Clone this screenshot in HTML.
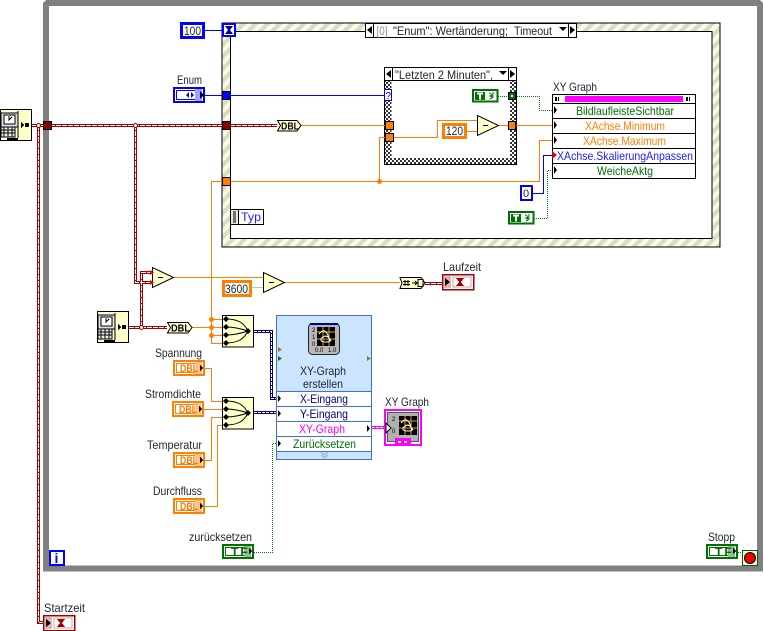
<!DOCTYPE html>
<html><head><meta charset="utf-8"><style>
html,body{margin:0;padding:0;background:#fff;width:764px;height:631px;overflow:hidden}
svg{display:block}
text{font-family:"Liberation Sans",sans-serif;font-size:12px;fill:#1c2430}
.c{shape-rendering:crispEdges}
.d{font-size:11px;font-weight:bold;fill:#ff7800}
.t{font-size:12px;font-weight:bold;fill:#006800;letter-spacing:2px}
.k{font-size:10px;font-weight:bold;fill:#000}
</style></head><body>
<svg width="764" height="631" viewBox="0 0 764 631" xmlns="http://www.w3.org/2000/svg">
<defs>
<pattern id="st" width="8.5" height="8.5" patternUnits="userSpaceOnUse" patternTransform="rotate(45)"><rect width="8.5" height="8.5" fill="#fbfbe6"/><rect width="4.2" height="8.5" fill="#dcdcc6"/></pattern>
<pattern id="ck" width="4" height="4" patternUnits="userSpaceOnUse"><rect width="4" height="4" fill="#fff"/><rect width="2" height="2" fill="#333"/><rect x="2" y="2" width="2" height="2" fill="#333"/></pattern>
<g id="pc" class="c"><rect x=".5" y=".5" width="31" height="31" fill="#ffffcc" stroke="#000"/>
<rect x="1" y="4" width="17" height="14" fill="#ddd" stroke="#000"/><rect x="4" y="6" width="11" height="9" fill="#fff" stroke="#000"/><path d="M9 7v4l3-3" stroke="#000" fill="none"/>
<rect x="1" y="18" width="14" height="10" fill="#eee" stroke="#000"/><path d="M4 18v10M8 18v10M12 18v10M1 21h14M1 24h14" stroke="#000"/><path d="M18 2v27" stroke="#000"/>
<path d="M7 30h11" stroke="#000" stroke-width="2"/><path d="M21 13v6l3-3z" fill="#000"/><rect x="25" y="14" width="4" height="4" fill="#000"/></g>
<g id="bun"><rect x=".5" y=".5" width="31" height="31.5" fill="#ffffcc" stroke="#000" class="c"/>
<path d="M4 4C16 4 22 8 26 16M4 12C12 12 20 14 26 16M4 20C12 20 20 18 26 16M4 28C16 28 22 24 26 16" fill="none" stroke="#000"/>
<path d="M4 1l3 3-3 3-3-3zM4 9l3 3-3 3-3-3zM4 17l3 3-3 3-3-3zM4 25l3 3-3 3-3-3zM26 13l3 3-3 3-3-3z" fill="#000"/></g>
<g id="tri"><path d="M.5.5v20l21-10z" fill="#ffffcc" stroke="#000"/><path d="M6 10.500h5" stroke="#000"/></g>
<g id="ctlO" class="c"><rect x="1" y="1" width="30" height="14" fill="#fff" stroke="#ff8000" stroke-width="2"/><rect x="3.500" y="3.500" width="25" height="9" fill="#fff" stroke="#ff8000"/><rect x="22" y="2" width="7" height="12" fill="#ffc080"/><path d="M27 5v6l3-3z" fill="#000"/></g>
<g id="ctlG" class="c"><rect x="1" y="1" width="30" height="13" fill="#fff" stroke="#007000" stroke-width="2"/><rect x="3.500" y="3.500" width="25" height="8" fill="#fff" stroke="#007000"/><rect x="22" y="2" width="7" height="11" fill="#90c090"/><path d="M27 4v6l3-3z" fill="#000"/></g>
<g id="tc" class="c"><rect x="1" y="1" width="24.500" height="11.500" fill="#fff" stroke="#007000" stroke-width="2"/><rect x="3" y="3" width="10" height="8" fill="#007000"/><path d="M5 4.500h6M8 4.500v6" stroke="#fff" stroke-width="2"/><path d="M17 4l4 2-3 1 3 1-3 2M20 4h2" stroke="#007000" fill="none"/></g>
<g id="ts" class="c"><rect x=".5" y=".5" width="31" height="15" fill="#fff" stroke="#a00000" stroke-width="1.500"/><rect x="2" y="2" width="7" height="12" fill="#e8b0b0"/><path d="M3 4v8l5-4z" fill="#000"/><rect x="11" y="3" width="18" height="10" fill="none" stroke="#b0b0b0"/><path d="M14 4h8l-3 4 3 4h-8l3-4z" fill="#a00000"/></g>
</defs>

<!-- while loop -->
<path class="c" d="M46 3H760V568.500H46Z" fill="none" stroke="#808080" stroke-width="6"/>
<path d="M43 3l3-3h-3zM763 3l-3-3h4z" fill="#fff"/>
<rect class="c" x="50" y="551" width="14" height="14" fill="#fff" stroke="#0000ff" stroke-width="2"/>
<text x="54.500" y="563" style="font-size:14px;font-weight:bold;fill:#0000ff">i</text>

<!-- event structure -->
<rect class="c" x="222" y="23" width="498" height="224" fill="url(#st)" stroke="#000"/>
<rect class="c" x="230.500" y="31.500" width="481.500" height="207" fill="#fff" stroke="#000"/>
<g class="c"><rect x="365.500" y="23.500" width="211" height="14" fill="#fff" stroke="#000"/><rect x="365.500" y="23.500" width="8" height="14" fill="#fff" stroke="#000"/><rect x="568.500" y="23.500" width="8" height="14" fill="#fff" stroke="#000"/></g>
<path d="M372 26v8l-5-4zM570 26v8l5-4zM559 27h8l-4 4z" fill="#000"/>
<text x="376.500" y="35" textLength="11" lengthAdjust="spacingAndGlyphs" style="fill:#8090b8">[0]</text>
<text x="393" y="35" textLength="115" lengthAdjust="spacingAndGlyphs">"Enum": Wertänderung;</text>
<text x="514" y="35" textLength="38" lengthAdjust="spacingAndGlyphs">Timeout</text>

<!-- case structure -->
<rect class="c" x="384.500" y="67.500" width="132" height="97" fill="url(#ck)" stroke="#000"/>
<rect class="c" x="391.500" y="80.500" width="118.500" height="77.500" fill="#fff"/>
<g class="c"><rect x="384.500" y="67.500" width="132" height="13" fill="#fff" stroke="#000"/><rect x="384.500" y="67.500" width="8" height="13" fill="#fff" stroke="#000"/><rect x="508.500" y="67.500" width="8" height="13" fill="#fff" stroke="#000"/></g>
<path d="M391 70v8l-5-4zM510 70v8l5-4zM499 71h8l-4 4z" fill="#000"/>
<text x="395" y="79" textLength="98" lengthAdjust="spacingAndGlyphs">"Letzten 2 Minuten",</text>

<!-- wires thin -->
<g fill="none" class="c">
<path d="M205 30.500H222" stroke="#0000ff"/>
<path d="M205 95.500H384" stroke="#0000ff"/>
<path d="M533 193.500H543.500V155.500H552" stroke="#0000ff"/>
<g stroke="#ff8000">
<path d="M301 125.500H385M516 125.500H552M498 125.500H508"/>
<path d="M211.500 181.500V343.500H222M211.500 181.500H539.500V140.500H552"/>
<path d="M379.500 181.500V137.500H385M393 137.500H437.500V120.500H477M467 131.500H477"/>
<path d="M192 327.500H222M211.500 319.500H222M211.500 335.500H222"/>
<path d="M173 277.500H263M284 282.500H400"/>
<path d="M205 368.500H211.500V401.500H222M204 409.500H222M205 460.500H211.500V417.500H222M205 506.500H217.500V425.500H222"/>
</g>
<path d="M252 287.500H263" stroke="#c0c0c0"/>
<g stroke="#008000" stroke-dasharray="1 1">
<path d="M498 96.500H508M517 96.500H539.500V110.500H552"/>
<path d="M534 218.500H547.500V170.500H552"/>
<path d="M254 552.500H272.500V443.500H276"/>
<path d="M738 552.500H743"/>
</g>
</g>

<rect class="c" x="384.500" y="89.500" width="7" height="11" fill="#fff" stroke="#0000ff"/>
<text x="385.500" y="99" style="font-size:10px;fill:#0000c0">?</text>
<g class="c" stroke="#000">
<rect x="385.500" y="121.500" width="8" height="8" fill="#ff8000"/><rect x="385.500" y="133.500" width="8" height="8" fill="#ff8000"/><rect x="508.500" y="121.500" width="7" height="8" fill="#ff8000"/>
<rect x="508.500" y="92.500" width="7" height="7" fill="#007000"/></g><rect class="c" x="511" y="95" width="2" height="2" fill="#fff"/>
<use href="#tri" x="477" y="115"/>
<rect class="c" x="443.500" y="124.500" width="22" height="13" fill="#fff" stroke="#ff8000" stroke-width="3"/>
<text x="446" y="135" textLength="17" lengthAdjust="spacingAndGlyphs">120</text>
<use href="#tc" x="472" y="89"/>

<!-- property node -->
<g class="c"><rect x="552.500" y="94.500" width="143" height="84" fill="#fff" stroke="#000"/><rect x="553" y="95" width="142" height="8" fill="#fffff0"/><path d="M552 103.500H696M552 118.500H696M552 133.500H696M552 148.500H696M552 163.500H696" stroke="#000"/><rect x="565" y="96" width="118" height="6" fill="#ff00ff"/></g>
<path d="M555 97h2v4h-2zM558 97h1v4h-1zM686 97h2v4h-2zM689 97h1v4h-1z" fill="#000" class="c"/>
<path d="M554 106v8l3-4zM554 121v8l3-4zM554 136v8l3-4zM554 166v8l3-4z" fill="#000"/><path d="M552 151v8l5-4z" fill="#d00000"/>
<text x="576" y="115" textLength="98" lengthAdjust="spacingAndGlyphs" style="fill:#007000">BildlaufleisteSichtbar</text>
<text x="585" y="130" textLength="80" lengthAdjust="spacingAndGlyphs" style="fill:#ff8000">XAchse.Minimum</text>
<text x="583" y="145" textLength="83" lengthAdjust="spacingAndGlyphs" style="fill:#ff8000">XAchse.Maximum</text>
<text x="557" y="160" textLength="136" lengthAdjust="spacingAndGlyphs" style="fill:#2020ff">XAchse.SkalierungAnpassen</text>
<text x="597" y="175" textLength="56" lengthAdjust="spacingAndGlyphs" style="fill:#007000">WeicheAktg</text>
<text x="553" y="91" textLength="44" lengthAdjust="spacingAndGlyphs">XY Graph</text>

<rect class="c" x="521" y="186" width="11" height="14" fill="#fff" stroke="#0000ff" stroke-width="2"/>
<text x="523" y="197" style="font-size:11px">0</text>
<use href="#tc" x="508" y="211"/>

<!-- Typ -->
<g class="c"><rect x="230.500" y="209.500" width="33" height="15" fill="#fff" stroke="#000"/><rect x="231" y="210" width="7" height="14" fill="#e8e8d8"/><path d="M238.500 209v16" stroke="#000"/><rect x="233" y="211" width="3" height="12" fill="#707070"/></g>
<text x="241" y="221" textLength="20" lengthAdjust="spacingAndGlyphs" style="fill:#2020ff">Typ</text>

<!-- thick wires -->
<g fill="none" class="c">
<path d="M32 125.500H277M38.500 125V622.500H43M135.500 125V282.500H152M129 327.500H167M141.500 327V272.500H152" stroke="#a00000" stroke-width="3"/>
<path d="M32 125.500H277M38.500 125V622.500H43M135.500 125V282.500H152M129 327.500H167M141.500 327V272.500H152" stroke="#fff" stroke-width="1" stroke-dasharray="5 1"/>
<path d="M425 283.500H442" stroke="#a00000" stroke-width="3"/>
<path d="M425 283.500H442" stroke="#fff" stroke-width="1" stroke-dasharray="5 1"/>
<path d="M254 331.500H271.500V398.500H276M254 412.500H276" stroke="#000080" stroke-width="3"/>
<path d="M254 331.500H271.500V398.500H276M254 412.500H276" stroke="#fff" stroke-width="1" stroke-dasharray="3 1"/>
<path d="M372 427.500H386" stroke="#ff00ff" stroke-width="3"/>
<path d="M372 427.500H386" stroke="#fff" stroke-width="1" stroke-dasharray="3 1"/>
</g>
<circle cx="38.500" cy="125.500" r="2" fill="#fff" stroke="#a00000" stroke-width="1"/>
<circle cx="135.500" cy="125.500" r="2" fill="#fff" stroke="#a00000" stroke-width="1"/>
<circle cx="141.500" cy="327.500" r="2" fill="#fff" stroke="#a00000" stroke-width="1"/>
<g fill="#ff8000"><circle cx="379.500" cy="181.500" r="2.500"/><circle cx="211.500" cy="319.500" r="2.500"/><circle cx="211.500" cy="327.500" r="2.500"/><circle cx="211.500" cy="335.500" r="2.500"/></g>

<!-- tunnels -->
<g class="c" stroke="#000">
<rect x="43.500" y="121.500" width="8" height="8" fill="#8b0000"/>
<rect x="222.500" y="121.500" width="8" height="8" fill="#8b0000"/>
<rect x="222.500" y="91.500" width="8" height="8" fill="#0000ff"/>
<rect x="222.500" y="177.500" width="8" height="8" fill="#ff8000"/>
</g>

<!-- timeout -->
<rect class="c" x="181.500" y="23.500" width="22" height="14" fill="#fff" stroke="#0000ff" stroke-width="3"/>
<text x="184" y="35" textLength="17" lengthAdjust="spacingAndGlyphs">100</text>
<rect class="c" x="223" y="24" width="12" height="12" fill="#fff" stroke="#0000ff" stroke-width="2"/>
<path d="M225 26h8l-3 4 3 4h-8l3-4z" fill="#000080"/>

<!-- enum -->
<rect class="c" x="174" y="88" width="30" height="14" fill="#fff" stroke="#0000ff" stroke-width="2"/>
<rect class="c" x="176.500" y="90.500" width="24" height="9" fill="#fff" stroke="#0000ff"/>
<rect class="c" x="195" y="89" width="7" height="12" fill="#a0a0ff"/>
<path d="M189 92v6l-3-3zM191 92v6l3-3z" fill="#0000d0"/><path d="M200 91v8l4-4z" fill="#000"/>
<text x="177" y="84" textLength="25" lengthAdjust="spacingAndGlyphs">Enum</text>

<!-- DBL nodes -->
<path d="M277.500 120.500H297l4 5-4 5.500H277.500l3-5.500z" fill="#ffffcc" stroke="#000"/>
<text x="281" y="129.500" textLength="18" lengthAdjust="spacingAndGlyphs" class="k">DBL</text>
<path d="M167.500 322.500H188l4 5-4 5.500H167.500l3-5.500z" fill="#ffffcc" stroke="#000"/>
<text x="171" y="331.500" textLength="19" lengthAdjust="spacingAndGlyphs" class="k">DBL</text>

<use href="#pc" x="0" y="109"/>
<use href="#pc" x="97" y="311"/>
<use href="#tri" x="152" y="267"/>
<path d="M150 270v5l4-2.500zM150 280v5l4-2.500z" fill="#f00000"/>
<use href="#tri" x="263" y="272"/>
<use href="#bun" x="222" y="315"/>
<use href="#bun" x="222" y="397"/>

<!-- 3600 -->
<rect class="c" x="223.500" y="281.500" width="27" height="14" fill="#fff" stroke="#ff8000" stroke-width="3"/>
<text x="225" y="293" textLength="23" lengthAdjust="spacingAndGlyphs">3600</text>

<!-- time convert -->
<path d="M400 277.500H421l4 5.500-4 5.500H400l2-5.500z" fill="#ffffcc" stroke="#000"/>
<path d="M405 280v6M408 280v6M403 281.500h7M403 284.500h7M412 283h5M415 281l2 2-2 2" stroke="#000" fill="none"/>
<rect x="418" y="279.500" width="5" height="7" fill="none" stroke="#000"/>
<use href="#ts" x="442" y="274"/>
<text x="443" y="271" textLength="38" lengthAdjust="spacingAndGlyphs">Laufzeit</text>
<use href="#ts" x="43" y="615"/>
<text x="44" y="612" textLength="41" lengthAdjust="spacingAndGlyphs">Startzeit</text>

<!-- orange controls -->
<use href="#ctlO" x="173" y="360"/><use href="#ctlO" x="172" y="401"/><use href="#ctlO" x="173" y="452"/><use href="#ctlO" x="173" y="498"/>
<text x="180" y="372" textLength="18" lengthAdjust="spacingAndGlyphs" class="d">DBL</text>
<text x="179" y="413" textLength="18" lengthAdjust="spacingAndGlyphs" class="d">DBL</text>
<text x="180" y="464" textLength="18" lengthAdjust="spacingAndGlyphs" class="d">DBL</text>
<text x="180" y="510" textLength="18" lengthAdjust="spacingAndGlyphs" class="d">DBL</text>
<text x="155" y="357" textLength="47" lengthAdjust="spacingAndGlyphs">Spannung</text>
<text x="145" y="398" textLength="56" lengthAdjust="spacingAndGlyphs">Stromdichte</text>
<text x="147" y="449" textLength="55" lengthAdjust="spacingAndGlyphs">Temperatur</text>
<text x="153" y="495" textLength="49" lengthAdjust="spacingAndGlyphs">Durchfluss</text>

<use href="#ctlG" x="222" y="544"/>
<text x="231" y="556" class="t">TF</text>
<text x="189" y="541" textLength="63" lengthAdjust="spacingAndGlyphs">zurücksetzen</text>

<use href="#ctlG" x="706" y="544"/>
<text x="715" y="556" class="t">TF</text>
<text x="708" y="541" textLength="27" lengthAdjust="spacingAndGlyphs">Stopp</text>
<g class="c"><rect x="742.500" y="550.500" width="15" height="15" fill="#ffffdd" stroke="#006000"/></g>
<circle cx="750" cy="558" r="5.500" fill="#f00000" stroke="#000" stroke-width="1"/>

<!-- express VI -->
<g class="c"><rect x="276.500" y="315.500" width="95" height="144" fill="#cce5ff" stroke="#3c6ee8"/>
<rect x="277" y="391" width="94" height="60" fill="#fff"/>
<path d="M276 391.500H372M276 406.500H372M276 421.500H372M276 436.500H372M276 451.500H372" stroke="#3c6ee8"/></g>
<path d="M278 347v5l4-2.500z" fill="#988000"/><path d="M278 356v5l4-2.500z" fill="#008000"/><path d="M367 356v5l4-2.500z" fill="#988000"/>
<rect x="308.500" y="323.500" width="31" height="31" rx="4" fill="#b8b8b8" stroke="#222"/>
<rect class="c" x="310" y="323" width="28" height="2" fill="#0000a0"/>
<rect class="c" x="317" y="327" width="18" height="19" fill="#000"/>
<path class="c" d="M317 332h18M317 339h18M323 327v19M329 327v19" stroke="#e8a020"/>
<path d="M319 334c6-8 9 1 10 4s2 4-3 4-7-2-3-5 7 2 8 4" fill="none" stroke="#fff"/>
<text x="312" y="332" style="font-size:6px;fill:#000">2</text><text x="312" y="339" style="font-size:6px;fill:#000">1</text><text x="312" y="346" style="font-size:6px;fill:#000">0</text><text x="315" y="352" style="font-size:6px;fill:#000">0.0</text><text x="328" y="352" style="font-size:6px;fill:#000">1.0</text>
<text x="300" y="375" textLength="46" lengthAdjust="spacingAndGlyphs">XY-Graph</text>
<text x="303" y="388" textLength="40" lengthAdjust="spacingAndGlyphs">erstellen</text>
<path d="M278 395v7l3-3.500zM278 410v7l3-3.500zM278 440v7l3-3.500zM367 425v7l3-3.500z" fill="#000"/>
<text x="300" y="403" textLength="48" lengthAdjust="spacingAndGlyphs" style="fill:#000080">X-Eingang</text>
<text x="300" y="418" textLength="48" lengthAdjust="spacingAndGlyphs" style="fill:#000080">Y-Eingang</text>
<text x="299" y="433" textLength="46" lengthAdjust="spacingAndGlyphs" style="fill:#ff00ff">XY-Graph</text>
<text x="293" y="448" textLength="63" lengthAdjust="spacingAndGlyphs" style="fill:#007000">Zurücksetzen</text>
<path d="M321 452l3.500 3 3.500-3M321 455l3.500 3 3.500-3" fill="none" stroke="#90a8c8"/>

<!-- XY graph indicator -->
<g class="c"><rect x="385" y="410" width="36" height="35" fill="#fff" stroke="#ff00ff" stroke-width="2"/><rect x="387.500" y="412.500" width="31" height="29" fill="#b0b0b0" stroke="#555"/></g>
<rect class="c" x="399" y="416" width="18" height="19" fill="#000"/>
<path class="c" d="M399 421h18M399 428h18M405 416v19M411 416v19" stroke="#e8a020"/>
<path d="M401 423c6-8 9 1 10 4s2 4-3 4-7-2-3-5 7 2 8 4" fill="none" stroke="#fff"/>
<text x="392" y="421" style="font-size:6px;fill:#000">2</text><text x="392" y="433" style="font-size:6px;fill:#000">0</text>
<rect class="c" x="395" y="438" width="16" height="8" fill="#ff00ff"/><rect class="c" x="398" y="441" width="3" height="2" fill="#fff"/><rect class="c" x="404" y="441" width="3" height="2" fill="#fff"/>
<path d="M386 423v10l5-5z" fill="#fff" stroke="#000"/>
<text x="385" y="406" textLength="44" lengthAdjust="spacingAndGlyphs">XY Graph</text>
</svg>
</body></html>
